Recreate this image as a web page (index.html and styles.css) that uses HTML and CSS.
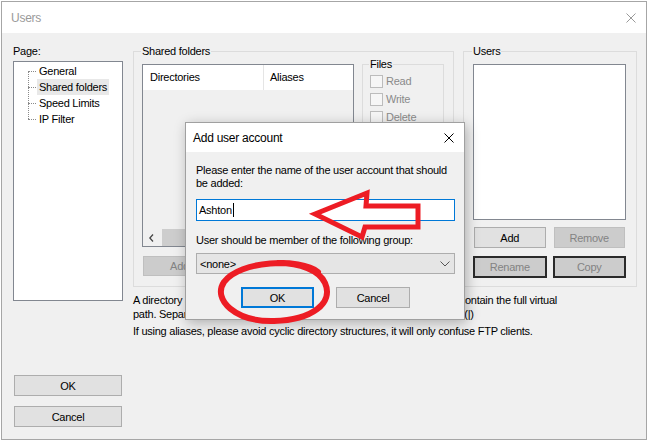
FILE: index.html
```html
<!DOCTYPE html>
<html lang="en">
<head>
    <meta charset="UTF-8">
    <title>Users</title>
    <link rel="stylesheet" href="styles.css">
</head>
<body>
    <div class="window">
        <div class="titlebar">
            <span class="title">Users</span>
            <svg class="close" width="10" height="10" viewBox="0 0 10 10"><path d="M0.5 0.5L9.5 9.5M9.5 0.5L0.5 9.5" stroke="#999" stroke-width="1"/></svg>
        </div>
        <div class="content">
            <!-- Page list -->
            <div class="side">
                <div class="page-label">Page:</div>
                <div class="tree">
                    <ul>
                        <li><span>General</span></li>
                        <li class="selected"><span>Shared folders</span></li>
                        <li><span>Speed Limits</span></li>
                        <li><span>IP Filter</span></li>
                    </ul>
                </div>
                <div class="side-buttons">
                    <button class="btn">OK</button>
                    <button class="btn">Cancel</button>
                </div>
            </div>

            <div class="main">
                <div class="groups">
                    <fieldset class="group shared">
                        <legend>Shared folders</legend>
                        <div class="shared-body">
                            <div class="dir-col">
                                <div class="listview">
                                    <div class="lv-head">
                                        <div class="lv-col first">Directories</div>
                                        <div class="lv-col">Aliases</div>
                                    </div>
                                    <div class="lv-body"></div>
                                    <div class="lv-scroll">
                                        <div class="sb-arrow">
                                            <svg width="5" height="8" viewBox="0 0 5 8"><path d="M4 0.5L0.8 4L4 7.5" fill="none" stroke="#444" stroke-width="1.3"/></svg>
                                        </div>
                                        <div class="sb-thumb"></div>
                                    </div>
                                </div>
                                <div class="dir-buttons">
                                    <button class="btn disabled">Add</button>
                                    <button class="btn disabled">Remove</button>
                                </div>
                            </div>
                            <fieldset class="group files">
                                <legend>Files</legend>
                                <div class="check"><span class="box"></span>Read</div>
                                <div class="check"><span class="box"></span>Write</div>
                                <div class="check"><span class="box"></span>Delete</div>
                                <div class="check"><span class="box"></span>Append</div>
                            </fieldset>
                        </div>
                    </fieldset>

                    <fieldset class="group users">
                        <legend>Users</legend>
                        <div class="user-list"></div>
                        <div class="user-buttons">
                            <button class="btn small">Add</button>
                            <button class="btn small disabled">Remove</button>
                            <button class="btn dark">Rename</button>
                            <button class="btn dark">Copy</button>
                        </div>
                    </fieldset>
                </div>
                <p class="note">A directory alias will also appear at the specified location. Aliases must contain the full virtual<br>path. Separate multiple aliases for one directory with the pipe character (|)</p>
                <p class="note second">If using aliases, please avoid cyclic directory structures, it will only confuse FTP clients.</p>
            </div>
        </div>
    </div>

    <!-- Add user account dialog -->
    <div class="dialog">
        <div class="dlg-title">
            <span>Add user account</span>
            <svg class="close" width="10" height="10" viewBox="0 0 10 10"><path d="M0.5 0.5L9.5 9.5M9.5 0.5L0.5 9.5" stroke="#000" stroke-width="1"/></svg>
        </div>
        <div class="dlg-body">
            <div class="dlg-text">Please enter the name of the user account that should<br>be added:</div>
            <div class="textbox">Ashton<span class="caret"></span></div>
            <div class="dlg-label">User should be member of the following group:</div>
            <div class="combo">
                <span>&lt;none&gt;</span>
                <svg width="10" height="6" viewBox="0 0 10 6"><path d="M0.5 0.5L5 5L9.5 0.5" fill="none" stroke="#555" stroke-width="1"/></svg>
            </div>
            <div class="dlg-buttons">
                <button class="btn default">OK</button>
                <button class="btn">Cancel</button>
            </div>
        </div>
    </div>

    <!-- red annotations -->
    <svg class="markup" width="650" height="443" viewBox="0 0 650 443">
        <path d="M315 214 L367 193 L366 206 L418 206 L418 227 L365 227 L362 237 Z" fill="none" stroke="#ed1c24" stroke-width="5" stroke-linejoin="miter"/>
        <path d="M318 272 C300 258 240 260 224 282 C212 300 236 322 274 321 C312 320 334 303 325 283 C319 270 300 263 278 263" fill="none" stroke="#ed1c24" stroke-width="6" stroke-linecap="round"/>
    </svg>
</body>
</html>
```

FILE: styles.css
```css
/* Base */
* {
    box-sizing: border-box;
}

body {
    margin: 0;
    background: #ffffff;
    font-family: 'Liberation Sans', Arial, sans-serif;
    font-size: 11px;
    letter-spacing: -0.25px;
    color: #000;
}

.btn {
    display: block;
    height: 21px;
    padding: 0;
    font-family: inherit;
    font-size: 11px;
    letter-spacing: -0.25px;
    color: #000;
    background: #e1e1e1;
    border: 1px solid #adadad;
}

.btn.disabled {
    background: #cccccc;
    border-color: #bfbfbf;
    color: #838383;
}

/* Main window */
.window {
    width: 646px;
    height: 439px;
    margin: 1px 0 0 1px;
    border: 1px solid #a6a6a6;
    background: #f0f0f0;
    display: flex;
    flex-direction: column;
}

.titlebar {
    height: 31px;
    background: #ffffff;
    display: flex;
    align-items: center;
    padding-left: 9px;
}

.titlebar .title {
    font-size: 12px;
    color: #9a9a9a;
}

.titlebar .close {
    margin-left: auto;
    margin-right: 10px;
}

.content {
    flex: 1;
    display: flex;
    gap: 10px;
    padding: 11px 9px 12px 11px;
}

/* Left page tree */
.side {
    width: 110px;
    display: flex;
    flex-direction: column;
}

.page-label {
    line-height: 14px;
    margin-bottom: 3px;
}

.tree {
    height: 240px;
    background: #fff;
    border: 1px solid #828790;
    padding-top: 1px;
}

.tree ul {
    list-style: none;
    margin: 0;
    padding: 0 0 0 23px;
    position: relative;
}

.tree ul::before {
    content: "";
    position: absolute;
    left: 14px;
    top: 8px;
    bottom: 8px;
    border-left: 1px dotted #8a8a8a;
}

.tree li {
    position: relative;
    line-height: 16px;
    height: 16px;
}

.tree li::before {
    content: "";
    position: absolute;
    left: -9px;
    top: 8px;
    width: 8px;
    border-top: 1px dotted #8a8a8a;
}

.tree li span {
    display: inline-block;
    padding: 0 2px;
}

.tree li.selected span {
    background: #e8e8e8;
}

.side-buttons {
    margin-top: auto;
    display: flex;
    flex-direction: column;
    gap: 10px;
}

.side-buttons .btn {
    width: 108px;
    margin-left: 1px;
}

/* Right side */
.main {
    flex: 1;
    display: flex;
    flex-direction: column;
}

.groups {
    display: flex;
    gap: 9px;
    height: 243px;
}

.group {
    margin: 0;
    min-width: 0;
    border: 1px solid #dcdcdc;
    padding: 0 9px 0 8px;
}

.group legend {
    padding: 0 1px;
    margin-left: -1px;
    line-height: 14px;
}

.shared {
    width: 321px;
}

.shared-body {
    display: flex;
    gap: 8px;
    align-items: flex-start;
}

.dir-col {
    width: 212px;
}

.listview {
    margin-top: 6px;
    height: 183px;
    border: 1px solid #828790;
    background: #f0f0f0;
    display: flex;
    flex-direction: column;
}

.lv-head {
    height: 25px;
    background: #fff;
    display: flex;
}

.lv-col {
    line-height: 25px;
    padding-left: 6px;
}

.lv-col.first {
    width: 121px;
    padding-left: 7px;
    border-right: 1px solid #e5e5e5;
}

.lv-body {
    flex: 1;
}

.lv-scroll {
    height: 17px;
    display: flex;
}

.sb-arrow {
    width: 17px;
    display: flex;
    align-items: center;
    justify-content: center;
}

.sb-thumb {
    flex: 1;
    margin: 0 40px 0 2px;
    background: #cdcdcd;
}

.dir-buttons {
    display: flex;
    gap: 6px;
    margin-top: 9px;
    padding-left: 1px;
}

.dir-buttons .btn {
    width: 73px;
    height: 20px;
}

.files {
    width: 82px;
    padding: 1px 4px 0 7px;
}

.files legend {
    line-height: 13px;
}

.check {
    height: 18px;
    display: flex;
    align-items: center;
    gap: 3px;
    color: #8a8a8a;
}

.check .box {
    width: 13px;
    height: 13px;
    border: 1px solid #bcbcbc;
    background: #f6f6f6;
}

.users {
    flex: 1;
    padding: 0 10px 0 9px;
}

.user-list {
    margin-top: 6px;
    height: 156px;
    border: 1px solid #828790;
    background: #fff;
}

.user-buttons {
    margin-top: 7px;
    display: grid;
    grid-template-columns: 1fr 1fr;
    column-gap: 6px;
    row-gap: 8px;
}

.user-buttons .btn.small {
    margin: 0 1px;
}

.user-buttons .btn.dark {
    height: 22px;
    background: #cccccc;
    border: 2px solid #2a2a2a;
    color: #838383;
}

.note {
    margin: 6px 0 0;
    line-height: 14px;
}

.note.second {
    margin-top: 3px;
}

/* Dialog */
.dialog {
    position: absolute;
    left: 185px;
    top: 122px;
    width: 280px;
    border: 1px solid #a0a0a0;
    background: #f0f0f0;
    box-shadow: 2px 3px 12px rgba(0, 0, 0, 0.28);
}

.dlg-title {
    height: 29px;
    background: #fff;
    display: flex;
    align-items: center;
    padding-left: 7px;
    font-size: 12px;
}

.dlg-title .close {
    margin-left: auto;
    margin-right: 10px;
}

.dlg-body {
    padding: 12px 9px 11px 10px;
}

.dlg-text,
.dlg-label {
    line-height: 13px;
    white-space: nowrap;
}

.textbox {
    margin-top: 9px;
    height: 22px;
    border: 1px solid #0078d7;
    background: #fff;
    padding-left: 2px;
    display: flex;
    align-items: center;
}

.caret {
    display: inline-block;
    width: 1px;
    height: 14px;
    background: #000;
    margin-left: 1px;
}

.dlg-label {
    margin-top: 13px;
}

.combo {
    margin-top: 6px;
    height: 21px;
    border: 1px solid #adadad;
    background: #e5e5e5;
    display: flex;
    align-items: center;
    justify-content: space-between;
    padding: 0 4px 0 3px;
}

.dlg-buttons {
    margin-top: 13px;
    display: flex;
    justify-content: center;
    gap: 22px;
}

.dlg-buttons .btn {
    width: 74px;
}

.dlg-buttons .btn.default {
    width: 73px;
    border: 2px solid #0078d7;
}

/* Red annotation layer */
.markup {
    position: absolute;
    left: 0;
    top: 0;
    pointer-events: none;
}
```
